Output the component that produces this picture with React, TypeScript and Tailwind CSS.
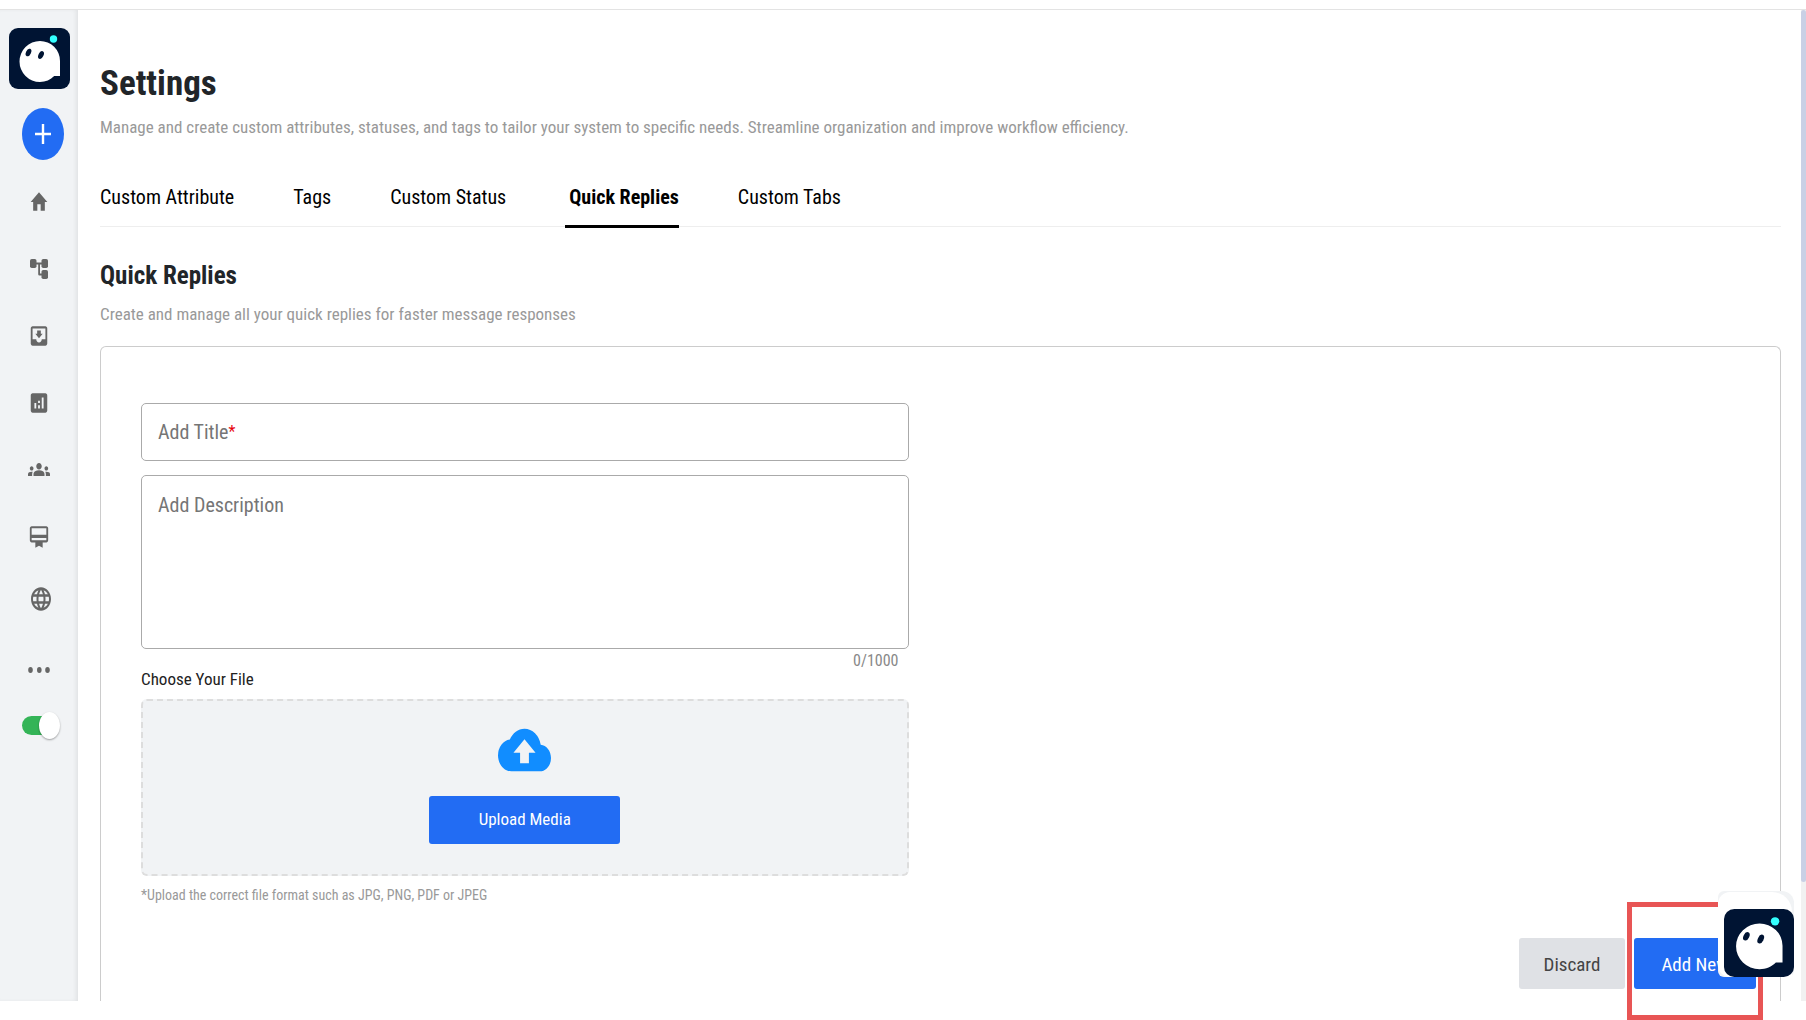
import React, { useState } from 'react'
import { MdAnalytics, MdCardMembership, MdCloudUpload, MdHome, MdLanguage, MdMoveToInbox } from 'react-icons/md'
import { clsx } from 'clsx'

const TABS = ['Custom Attribute', 'Tags', 'Custom Status', 'Quick Replies', 'Custom Tabs']
const MAX_LENGTH = 1000

function Logo({ className }: { className?: string }) {
  return (
    <svg viewBox="0 0 61 61" className={className} preserveAspectRatio="none" aria-hidden="true">
      <rect width="61" height="61" rx="9" fill="#001433" />
      <path d="M31 13a20.5 20.5 0 0 0 0 41c5.600 0 10.500-2.200 14.200-6H51V33A20 20 0 0 0 31 13Z" fill="#fff" />
      <ellipse cx="19.500" cy="24.500" rx="2.500" ry="4" fill="#001433" transform="rotate(25 19.500 24.500)" />
      <ellipse cx="32" cy="27" rx="2.500" ry="4.200" fill="#001433" transform="rotate(25 32 27)" />
      <circle cx="44.500" cy="11" r="3.700" fill="#3ff" />
    </svg>
  )
}

function TreeIcon() {
  return (
    <svg viewBox="0 0 18 20" width="18" height="20" fill="currentColor" aria-hidden="true">
      <rect x="0" y="0" width="6.500" height="9" rx="1.800" />
      <rect x="11.500" y="0" width="6.500" height="9" rx="1.800" />
      <rect x="11.500" y="11" width="6.500" height="9" rx="1.800" />
      <path d="M6 3.600h6v1.800h-2v9.200h2v1.800H9.400a1.200 1.200 0 0 1-1.200-1.200V5.400H6z" />
    </svg>
  )
}

function GroupsIcon() {
  return (
    <svg viewBox="0 0 24 14" width="22" height="15" preserveAspectRatio="none" fill="currentColor" aria-hidden="true">
      <path d="M12 7.750c1.630 0 3.070.39 4.240.9 1.080.48 1.760 1.560 1.760 2.730V13H6v-1.610c0-1.180.68-2.260 1.760-2.730 1.170-.52 2.610-.91 4.240-.91zM4 8c1.100 0 2-.9 2-2s-.9-2-2-2-2 .9-2 2 .9 2 2 2zm1.130 1.100C4.760 9.040 4.390 9 4 9c-.99 0-1.930.21-2.780.58A2.010 2.010 0 0 0 0 11.430V13h4.500v-1.610c0-.83.23-1.610.63-2.290zM20 8c1.100 0 2-.9 2-2s-.9-2-2-2-2 .9-2 2 .9 2 2 2zm4 3.430c0-.81-.48-1.530-1.220-1.850A6.950 6.950 0 0 0 20 9c-.39 0-.76.04-1.130.1.4.68.63 1.460.63 2.290V13H24v-1.570zM12 1c1.660 0 3 1.340 3 3s-1.340 3-3 3-3-1.340-3-3 1.340-3 3-3z" />
    </svg>
  )
}

function MoreIcon() {
  return (
    <svg viewBox="0 0 22 6" width="22" height="6" fill="currentColor" aria-hidden="true">
      <ellipse cx="2.500" cy="3" rx="2.300" ry="2.900" />
      <ellipse cx="11.300" cy="3" rx="2.300" ry="2.900" />
      <ellipse cx="19.500" cy="3" rx="2.300" ry="2.900" />
    </svg>
  )
}

const NAV = [
  { label: 'Home', icon: <MdHome preserveAspectRatio="none" className="h-[26px] w-5" /> },
  { label: 'Flows', icon: <TreeIcon /> },
  { label: 'Inbox', icon: <MdMoveToInbox preserveAspectRatio="none" className="h-[26px] w-[22px]" /> },
  { label: 'Analytics', icon: <MdAnalytics preserveAspectRatio="none" className="h-[26px] w-[22px]" /> },
  { label: 'Teams', icon: <GroupsIcon /> },
  { label: 'Membership', icon: <MdCardMembership preserveAspectRatio="none" className="h-[26px] w-[22px]" /> },
]

function Sidebar() {
  const [online, setOnline] = useState(true)

  return (
    <aside className="flex w-[78px] shrink-0 flex-col items-center bg-[#f1f3f5] pt-[18px] text-[#666] shadow-[inset_-3px_0_4px_-1px_rgba(0,0,0,0.07)]">
      <Logo className="size-[61px]" />
      <button
        aria-label="Create"
        className="mt-[19px] ml-2 flex h-[52px] w-[42px] items-center justify-center rounded-[50%] bg-[#226cf3] text-white"
      >
        <svg viewBox="0 0 16 20" width="16" height="20" stroke="currentColor" strokeWidth="2.400" aria-hidden="true">
          <path d="M8 0v20M0 10h16" />
        </svg>
      </button>

      <nav className="mt-2 flex flex-col items-center">
        {NAV.map(({ label, icon }) => (
          <a key={label} href="#" aria-label={label} className="flex h-[67px] w-12 items-center justify-center">
            {icon}
          </a>
        ))}
        <a href="#" aria-label="Website" className="ml-1 flex h-[58px] w-12 items-center justify-center">
          <MdLanguage preserveAspectRatio="none" className="h-7 w-6" />
        </a>
        <a href="#" aria-label="More" className="flex h-[83px] w-12 items-center justify-center">
          <MoreIcon />
        </a>
      </nav>

      <label className="relative ml-1 flex h-7 w-[38px] cursor-pointer items-center">
        <input
          type="checkbox"
          role="switch"
          aria-label="Online"
          checked={online}
          onChange={(e) => setOnline(e.target.checked)}
          className="peer sr-only"
        />
        <span className="h-[19px] w-8 rounded-full bg-gray-400 peer-checked:bg-[#34b457]" />
        <span className="absolute left-0 h-[27px] w-[21px] rounded-[50%] bg-white shadow-[0_1px_2px_rgba(0,0,0,0.35)] peer-checked:left-[17px]" />
      </label>
    </aside>
  )
}

function QuickReplyForm() {
  const [title, setTitle] = useState('')
  const [description, setDescription] = useState('')

  return (
    <form className="flex flex-1 flex-col rounded-t-md border border-b-0 border-[#ccc] px-10 pt-14">
      <div className="w-[48%] min-w-80">
        <div className="relative">
          <input
            id="title"
            value={title}
            onChange={(e) => setTitle(e.target.value)}
            className="block h-[58px] w-full rounded-[5px] border border-[#aaa] px-4 text-xl outline-none"
          />
          {!title && (
            <label htmlFor="title" className="absolute inset-y-0 left-[17px] flex items-center text-xl text-[#757575]">
              Add Title<span className="text-base leading-7 text-red-600">*</span>
            </label>
          )}
        </div>

        <textarea
          aria-label="Description"
          placeholder="Add Description"
          maxLength={MAX_LENGTH}
          value={description}
          onChange={(e) => setDescription(e.target.value)}
          className="mt-3.5 block h-[174px] w-full resize-none rounded-[5px] border border-[#aaa] px-4 py-[15px] text-xl outline-none placeholder:text-[#757575]"
        />
        <div className="flex h-6 items-center justify-end pr-2.5 text-base text-[#888]">
          {description.length}/{MAX_LENGTH}
        </div>

        <label htmlFor="file" className="block text-[17px] leading-3 text-[#222]">
          Choose Your File
        </label>
        <div className="mt-3.5 flex h-[177px] flex-col items-center rounded-md border-2 border-dashed border-[#ddd] bg-[#f1f3f5] pt-[17px]">
          <MdCloudUpload preserveAspectRatio="none" className="h-16 w-[53px] text-[#118dff]" />
          <input id="file" type="file" accept=".jpg,.jpeg,.png,.pdf" className="hidden" />
          <button
            type="button"
            onClick={() => document.getElementById('file')?.click()}
            className="mt-3.5 h-12 w-[191px] rounded-[3px] bg-[#226cf3] text-[17px] text-white"
          >
            Upload Media
          </button>
        </div>
        <p className="mt-[7px] text-sm leading-6 text-[#999]">*Upload the correct file format such as JPG, PNG, PDF or JPEG</p>
      </div>

      <div className="-mr-4 mt-[31px] flex justify-end gap-[9px]">
        <button type="button" className="h-[51px] w-[106px] rounded-[3px] bg-[#dfe1e5] pt-1 text-[19px] text-[#444]">
          Discard
        </button>
        <button type="submit" className="h-[51px] w-[122px] rounded-[3px] bg-[#226cf3] pt-1 text-[19px] text-white">
          Add New
        </button>
      </div>
    </form>
  )
}

export default function App() {
  const [activeTab, setActiveTab] = useState('Quick Replies')

  return (
    <div className="relative flex h-screen flex-col overflow-hidden bg-white pb-[19px] font-['Roboto_Condensed',Roboto,sans-serif]">
      <header className="h-2.5 shrink-0 border-b border-[#e3e3e3]" />

      <div className="flex min-h-0 flex-1 overflow-hidden">
        <Sidebar />

        <main className="flex min-w-0 flex-1 flex-col overflow-hidden pr-5 pl-[22px] pt-[50px]">
          <h1 className="text-[35px] leading-12 font-bold text-[#212529]">Settings</h1>
          <p className="mt-[7px] text-[17px] leading-6 text-[#999]">
            Manage and create custom attributes, statuses, and tags to tailor your system to specific needs. Streamline organization and
            improve workflow efficiency.
          </p>

          <div role="tablist" className="mt-8 flex h-14 gap-[59px] border-b border-[#eee]">
            {TABS.map((tab) => (
              <button
                key={tab}
                role="tab"
                aria-selected={tab === activeTab}
                onClick={() => setActiveTab(tab)}
                className={clsx(
                  '-mb-0.5 border-b-[3px] pb-[3px] text-xl text-black',
                  tab === activeTab ? 'border-black pl-1 font-bold' : 'border-transparent'
                )}
              >
                {tab}
              </button>
            ))}
          </div>

          <h2 className="mt-[33px] text-[25px] leading-8 font-bold text-[#212529]">Quick Replies</h2>
          <p className="mt-2.5 mb-5 text-[17px] leading-6 text-[#999]">
            Create and manage all your quick replies for faster message responses
          </p>

          <QuickReplyForm />
        </main>

        {/* Scrollbar */}
        <div className="w-[5px] shrink-0 bg-[#f1f1f1]">
          <div className="h-[88%] rounded-sm bg-[#c9d0e5]" />
        </div>
      </div>

      {/* Highlight round the submit button */}
      <div className="pointer-events-none absolute right-[43px] bottom-0 h-[118px] w-[136px] border-[5px] border-[#e85555]" />

      {/* Chat widget */}
      <div className="absolute right-3 bottom-[43px] h-[86px] w-[76px] rounded-md rounded-tr-xl bg-[#f1f3f5] pt-px pr-0.5">
        <div className="h-full w-full rounded-l-xl rounded-tr-[20px] bg-white" />
        <button aria-label="Open chat" className="absolute right-0 bottom-0">
          <Logo className="h-[68px] w-[70px]" />
        </button>
      </div>
    </div>
  )
}
